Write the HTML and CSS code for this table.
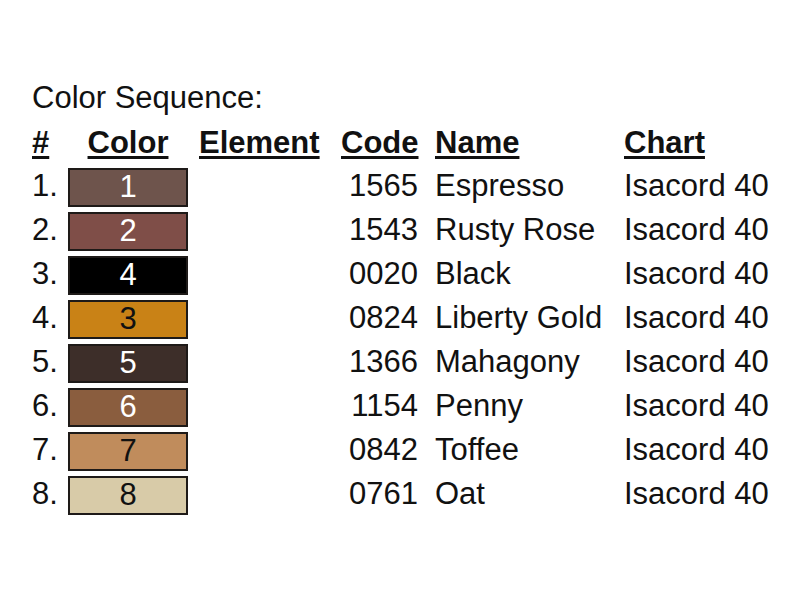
FILE: index.html
```html
<!DOCTYPE html>
<html>
<head>
<meta charset="utf-8">
<link rel="stylesheet" href="styles.css">
</head>
<body>
<div class="sheet">
  <div class="title">Color Sequence:</div>
  <div class="table">
    <div class="hd c1">#</div>
    <div class="hd c2">Color</div>
    <div class="hd c3">Element</div>
    <div class="hd c4">Code</div>
    <div class="hd c5">Name</div>
    <div class="hd c6">Chart</div>

    <div class="c1">1.</div>
    <div class="c2"><div class="sw sw-espresso light">1</div></div>
    <div class="c3"></div>
    <div class="c4">1565</div>
    <div class="c5">Espresso</div>
    <div class="c6">Isacord 40</div>

    <div class="c1">2.</div>
    <div class="c2"><div class="sw sw-rose light">2</div></div>
    <div class="c3"></div>
    <div class="c4">1543</div>
    <div class="c5">Rusty Rose</div>
    <div class="c6">Isacord 40</div>

    <div class="c1">3.</div>
    <div class="c2"><div class="sw sw-black light">4</div></div>
    <div class="c3"></div>
    <div class="c4">0020</div>
    <div class="c5">Black</div>
    <div class="c6">Isacord 40</div>

    <div class="c1">4.</div>
    <div class="c2"><div class="sw sw-gold dark">3</div></div>
    <div class="c3"></div>
    <div class="c4">0824</div>
    <div class="c5">Liberty Gold</div>
    <div class="c6">Isacord 40</div>

    <div class="c1">5.</div>
    <div class="c2"><div class="sw sw-mahogany light">5</div></div>
    <div class="c3"></div>
    <div class="c4">1366</div>
    <div class="c5">Mahagony</div>
    <div class="c6">Isacord 40</div>

    <div class="c1">6.</div>
    <div class="c2"><div class="sw sw-penny light">6</div></div>
    <div class="c3"></div>
    <div class="c4">1154</div>
    <div class="c5">Penny</div>
    <div class="c6">Isacord 40</div>

    <div class="c1">7.</div>
    <div class="c2"><div class="sw sw-toffee dark">7</div></div>
    <div class="c3"></div>
    <div class="c4">0842</div>
    <div class="c5">Toffee</div>
    <div class="c6">Isacord 40</div>

    <div class="c1">8.</div>
    <div class="c2"><div class="sw sw-oat dark">8</div></div>
    <div class="c3"></div>
    <div class="c4">0761</div>
    <div class="c5">Oat</div>
    <div class="c6">Isacord 40</div>
  </div>
</div>
</body>
</html>
```
FILE: styles.css
```css
html, body {
  margin: 0;
  padding: 0;
  background: #fff;
}
body {
  width: 800px;
  height: 600px;
  overflow: hidden;
  font-family: "Liberation Sans", Arial, sans-serif;
  font-size: 31px;
  color: #111;
}
.sheet {
  padding: 76px 0 0 32px;
}
.title {
  height: 44px;
  line-height: 44px;
}
.table {
  display: grid;
  grid-template-columns: 36px 120px 153px 77px 206px 1fr;
  grid-auto-rows: 44px;
  line-height: 44px;
}
.hd {
  font-weight: bold;
  text-decoration: underline;
  text-decoration-thickness: 3px;
  text-underline-offset: 3px;
  line-height: 45px;
}
.c2 { text-align: center; }
.c3 { padding-left: 11px; }
.c4 { text-align: right; }
.c5 { padding-left: 17px; }
.c6 { padding-left: 0; }
.sw {
  box-sizing: border-box;
  height: 39px;
  margin-top: 4px;
  border: 2px solid #1e1a18;
  line-height: 34px;
  text-align: center;
}
.light { color: #fff; }
.dark { color: #111; }
.sw-espresso { background: #6e544c; }
.sw-rose { background: #7f4e48; }
.sw-black { background: #000; }
.sw-gold { background: #c98216; }
.sw-mahogany { background: #3d2e29; }
.sw-penny { background: #8a5d3e; }
.sw-toffee { background: #c08c5c; }
.sw-oat { background: #d8cba8; }
```
